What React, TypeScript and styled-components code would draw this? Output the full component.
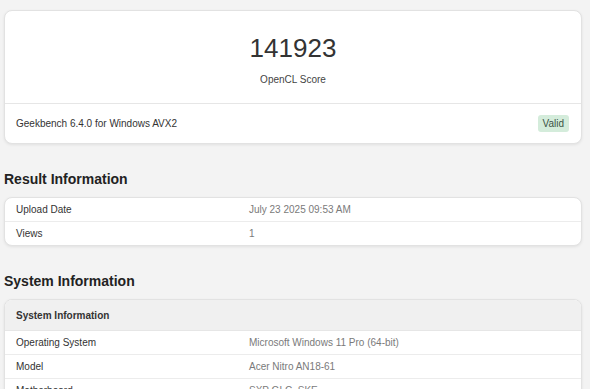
import styled, { createGlobalStyle } from 'styled-components';

const GlobalStyle = createGlobalStyle`
  html, body {
    margin: 0;
    padding: 0;
    background: #f3f3f3;
  }
  body {
    font-family: 'Liberation Sans', Arial, sans-serif;
    color: #333;
  }
`;

const Page = styled.main`
  width: 578px;
  padding: 10px 0 0 4px;
`;

const Card = styled.section`
  background: #fff;
  border: 1px solid #e2e2e2;
  border-radius: 8px;
  box-shadow: 0 1px 3px rgba(0, 0, 0, 0.08);
  overflow: hidden;
`;

const ScoreBox = styled.div`
  display: flex;
  flex-direction: column;
  align-items: center;
  padding: 22px 0 16px;
  border-bottom: 1px solid #e6e6e6;
`;

const Score = styled.div`
  font-size: 26px;
  line-height: 30px;
  color: #333;
`;

const ScoreLabel = styled.div`
  margin-top: 10px;
  font-size: 10px;
  line-height: 14px;
  color: #444;
`;

const VersionBar = styled.div`
  display: flex;
  align-items: center;
  justify-content: space-between;
  padding: 11px 12px 11px 11px;
  font-size: 10px;
  color: #333;
`;

const Badge = styled.span`
  display: inline-flex;
  align-items: center;
  height: 17px;
  padding: 0 5px;
  border-radius: 3px;
  background: #d4ecdb;
  color: #3b5245;
  font-size: 10px;
`;

const Heading = styled.h2`
  margin: 25px 0 8px;
  font-size: 14px;
  line-height: 20px;
  font-weight: bold;
  color: #222;
`;

const TableHead = styled.div`
  height: 30px;
  display: flex;
  align-items: center;
  padding: 0 11px;
  background: #f0f0f0;
  border-bottom: 1px solid #e6e6e6;
  font-size: 10px;
  font-weight: bold;
  color: #333;
`;

const Row = styled.div`
  display: grid;
  grid-template-columns: 233px 1fr;
  align-items: center;
  height: 23px;
  padding: 0 11px;
  font-size: 10px;

  & + & {
    border-top: 1px solid #ececec;
  }
`;

const Label = styled.span`
  color: #333;
`;

const Value = styled.span`
  color: #7a7a7a;
`;

type Item = { label: string; value: string };

const resultInfo: Item[] = [
  { label: 'Upload Date', value: 'July 23 2025 09:53 AM' },
  { label: 'Views', value: '1' },
];

const systemInfo: Item[] = [
  { label: 'Operating System', value: 'Microsoft Windows 11 Pro (64-bit)' },
  { label: 'Model', value: 'Acer Nitro AN18-61' },
  { label: 'Motherboard', value: 'SXP GLC_SKE' },
  { label: 'Power Plan', value: 'Balanced' },
];

const InfoRows = ({ items }: { items: Item[] }) => (
  <>
    {items.map((item) => (
      <Row key={item.label}>
        <Label>{item.label}</Label>
        <Value>{item.value}</Value>
      </Row>
    ))}
  </>
);

const App = () => {
  return (
    <>
      <GlobalStyle />
      <Page>
        <Card>
          <ScoreBox>
            <Score>141923</Score>
            <ScoreLabel>OpenCL Score</ScoreLabel>
          </ScoreBox>
          <VersionBar>
            <span>Geekbench 6.4.0 for Windows AVX2</span>
            <Badge>Valid</Badge>
          </VersionBar>
        </Card>

        <Heading>Result Information</Heading>
        <Card>
          <InfoRows items={resultInfo} />
        </Card>

        <Heading>System Information</Heading>
        <Card>
          <TableHead>System Information</TableHead>
          <InfoRows items={systemInfo} />
        </Card>
      </Page>
    </>
  );
};

export default App;
